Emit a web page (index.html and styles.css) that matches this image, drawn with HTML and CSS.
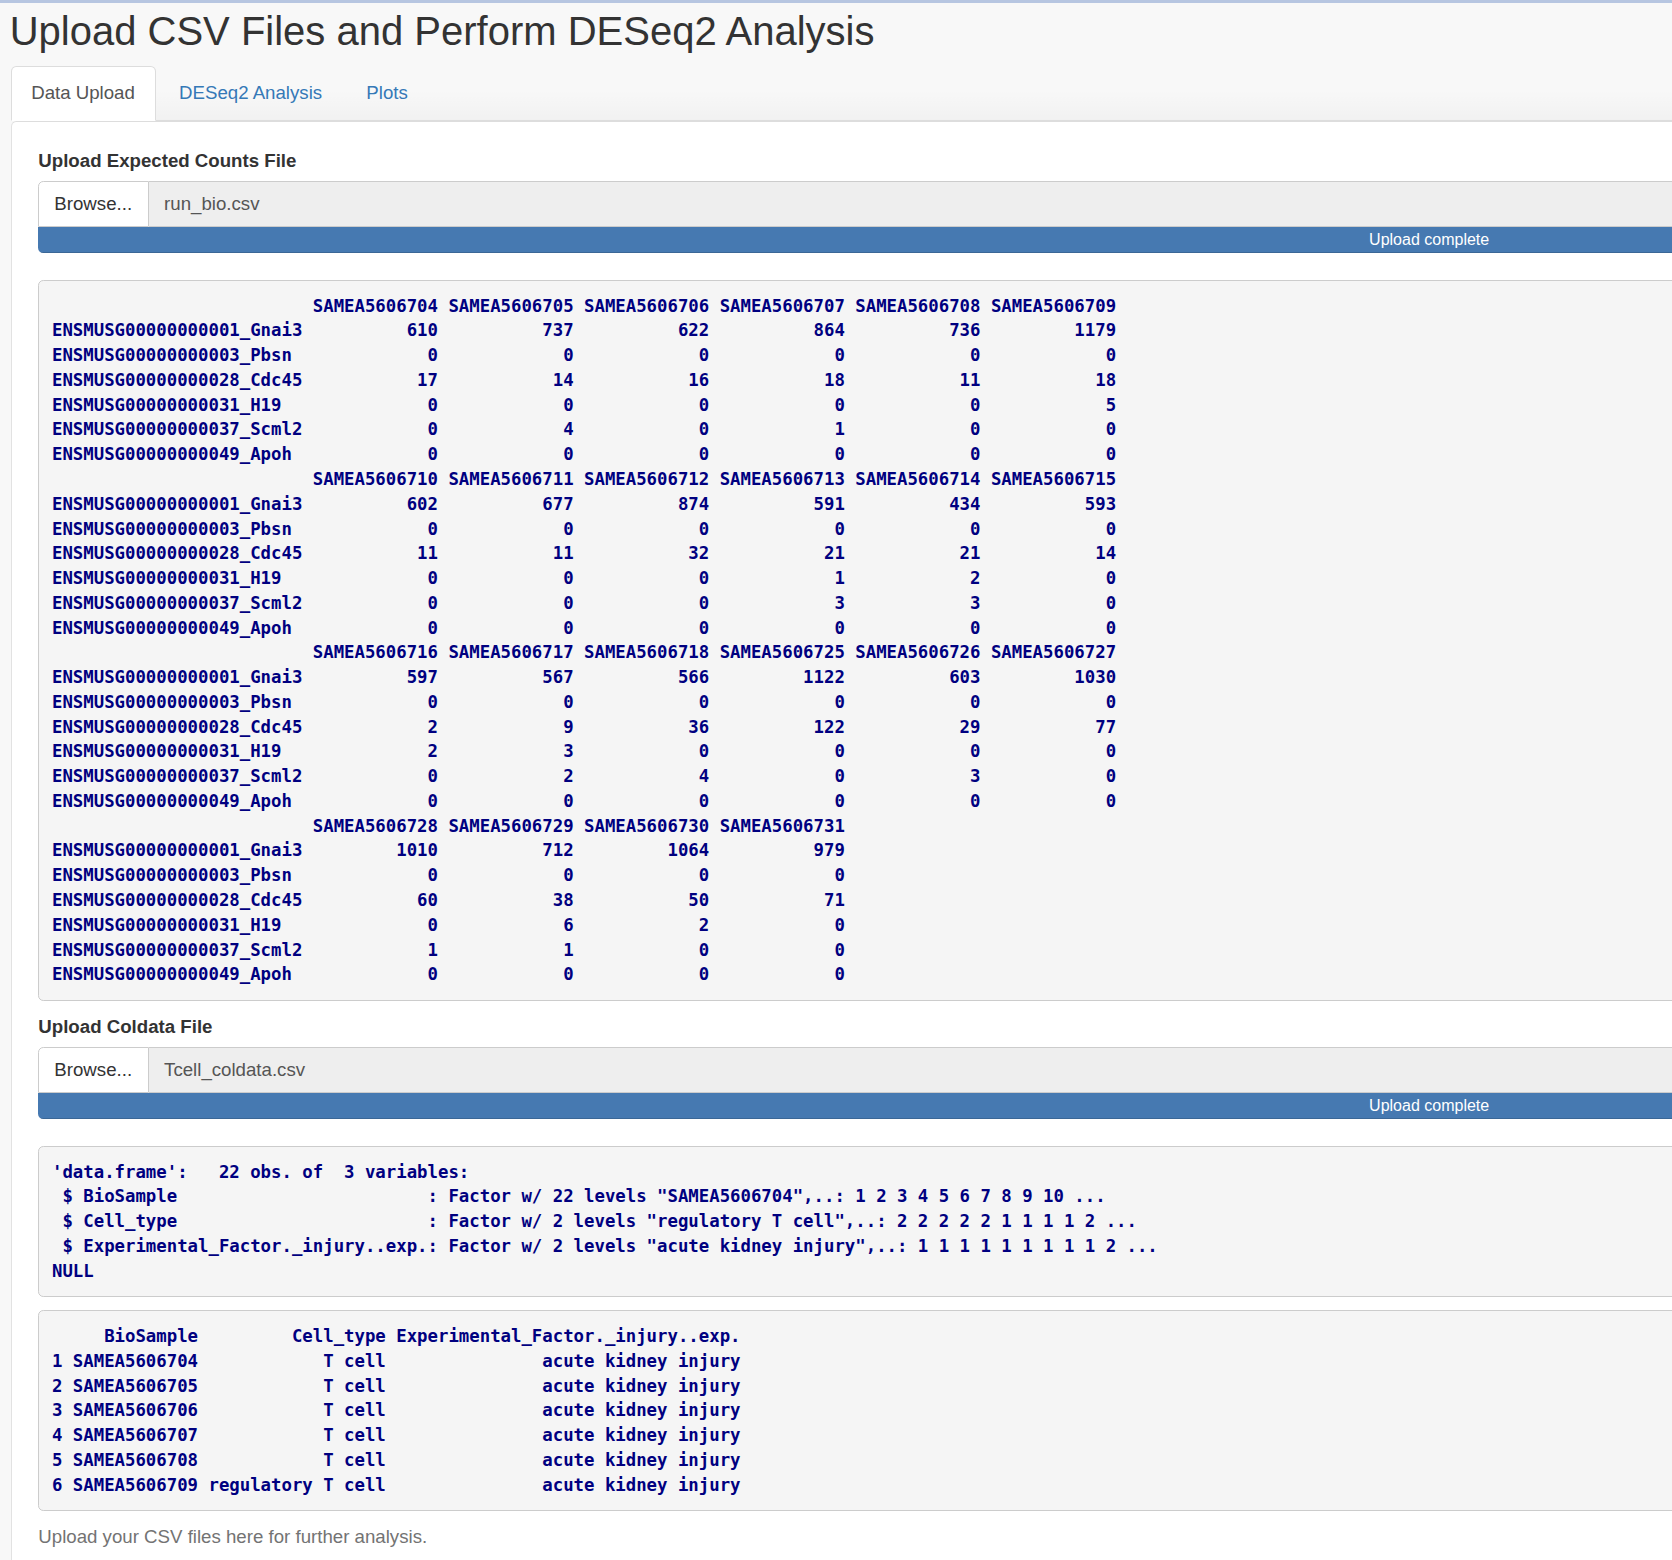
FILE: index.html
```html
<!DOCTYPE html>
<html lang="en">
<head>
<meta charset="utf-8">
<title>Upload CSV Files and Perform DESeq2 Analysis</title>
<link rel="stylesheet" href="styles.css">
</head>
<body>
<div class="topline"></div>
<div class="page">
  <h2 class="title">Upload CSV Files and Perform DESeq2 Analysis</h2>
  <ul class="tabs">
    <li class="tab active"><a>Data Upload</a></li>
    <li class="tab"><a>DESeq2 Analysis</a></li>
    <li class="tab"><a>Plots</a></li>
  </ul>
  <div class="panel">
    <div class="field">
      <label class="field-label">Upload Expected Counts File</label>
      <div class="file-input">
        <span class="browse">Browse...</span>
        <span class="file-name">run_bio.csv</span>
      </div>
      <div class="progress"><div class="progress-bar">Upload complete</div></div>
    </div>
<pre class="out">                         SAMEA5606704 SAMEA5606705 SAMEA5606706 SAMEA5606707 SAMEA5606708 SAMEA5606709
ENSMUSG00000000001_Gnai3          610          737          622          864          736         1179
ENSMUSG00000000003_Pbsn             0            0            0            0            0            0
ENSMUSG00000000028_Cdc45           17           14           16           18           11           18
ENSMUSG00000000031_H19              0            0            0            0            0            5
ENSMUSG00000000037_Scml2            0            4            0            1            0            0
ENSMUSG00000000049_Apoh             0            0            0            0            0            0
                         SAMEA5606710 SAMEA5606711 SAMEA5606712 SAMEA5606713 SAMEA5606714 SAMEA5606715
ENSMUSG00000000001_Gnai3          602          677          874          591          434          593
ENSMUSG00000000003_Pbsn             0            0            0            0            0            0
ENSMUSG00000000028_Cdc45           11           11           32           21           21           14
ENSMUSG00000000031_H19              0            0            0            1            2            0
ENSMUSG00000000037_Scml2            0            0            0            3            3            0
ENSMUSG00000000049_Apoh             0            0            0            0            0            0
                         SAMEA5606716 SAMEA5606717 SAMEA5606718 SAMEA5606725 SAMEA5606726 SAMEA5606727
ENSMUSG00000000001_Gnai3          597          567          566         1122          603         1030
ENSMUSG00000000003_Pbsn             0            0            0            0            0            0
ENSMUSG00000000028_Cdc45            2            9           36          122           29           77
ENSMUSG00000000031_H19              2            3            0            0            0            0
ENSMUSG00000000037_Scml2            0            2            4            0            3            0
ENSMUSG00000000049_Apoh             0            0            0            0            0            0
                         SAMEA5606728 SAMEA5606729 SAMEA5606730 SAMEA5606731
ENSMUSG00000000001_Gnai3         1010          712         1064          979
ENSMUSG00000000003_Pbsn             0            0            0            0
ENSMUSG00000000028_Cdc45           60           38           50           71
ENSMUSG00000000031_H19              0            6            2            0
ENSMUSG00000000037_Scml2            1            1            0            0
ENSMUSG00000000049_Apoh             0            0            0            0</pre>
    <div class="field">
      <label class="field-label">Upload Coldata File</label>
      <div class="file-input">
        <span class="browse">Browse...</span>
        <span class="file-name">Tcell_coldata.csv</span>
      </div>
      <div class="progress"><div class="progress-bar">Upload complete</div></div>
    </div>
<pre class="out">'data.frame':   22 obs. of  3 variables:
 $ BioSample                        : Factor w/ 22 levels "SAMEA5606704",..: 1 2 3 4 5 6 7 8 9 10 ...
 $ Cell_type                        : Factor w/ 2 levels "regulatory T cell",..: 2 2 2 2 2 1 1 1 1 2 ...
 $ Experimental_Factor._injury..exp.: Factor w/ 2 levels "acute kidney injury",..: 1 1 1 1 1 1 1 1 1 2 ...
NULL</pre>
<pre class="out">     BioSample         Cell_type Experimental_Factor._injury..exp.
1 SAMEA5606704            T cell               acute kidney injury
2 SAMEA5606705            T cell               acute kidney injury
3 SAMEA5606706            T cell               acute kidney injury
4 SAMEA5606707            T cell               acute kidney injury
5 SAMEA5606708            T cell               acute kidney injury
6 SAMEA5606709 regulatory T cell               acute kidney injury</pre>
    <p class="help">Upload your CSV files here for further analysis.</p>
  </div>
</div>
</body>
</html>
```
FILE: styles.css
```css
html, body {
  margin: 0;
  padding: 0;
  overflow: hidden;
}
body {
  background: #f8f8f8;
  font-family: "Liberation Sans", Arial, Helvetica, sans-serif;
  font-size: 18.67px;
  line-height: 1.42857;
  color: #333;
}
.topline {
  height: 3px;
  background: #b7c6e1;
}
.page {
  width: 2837px;
  padding-left: 10.67px;
}
.title {
  margin: 5.8px 0 13.33px -1px;
  font-size: 40px;
  font-weight: 500;
  line-height: 1.1;
  color: #333;
}
.tabs {
  list-style: none;
  margin: 0;
  padding: 0;
  display: flex;
  border-bottom: 1px solid #ddd;
  background: linear-gradient(to bottom, rgba(0,0,0,0) 45%, rgba(0,0,0,0.028) 100%);
}
.tab {
  margin-bottom: -1px;
}
.tab a {
  display: block;
  margin-right: 2.67px;
  padding: 12.9px 20px 12.9px 19.5px;
  line-height: 26.67px;
  border: 1px solid transparent;
  border-radius: 5.33px 5.33px 0 0;
  color: #3579b7;
}
.tab.active a {
  color: #555;
  background: #fff;
  border-color: #ddd;
  border-bottom-color: transparent;
}
.panel {
  background: #fff;
  border: 1px solid #ddd;
  border-left-color: #e2e2e2;
  border-radius: 5.33px 0 0 0;
  padding: 26.5px 26.67px 26.67px;
}
.field-label {
  display: block;
  font-weight: bold;
  margin-bottom: 6.67px;
  line-height: 26.67px;
}
.file-input {
  display: flex;
  height: 45.33px;
  box-sizing: border-box;
}
.browse {
  display: flex;
  align-items: center;
  padding: 0 16px 0 15px;
  background: #fff;
  color: #333;
  border: 1px solid #ccc;
  border-radius: 5.33px 0 0 0;
}
.file-name {
  flex: 1;
  display: flex;
  align-items: center;
  padding: 0 16px 0 15px;
  background: #eee;
  color: #555;
  border: 1px solid #ccc;
  border-left: none;
}
.progress {
  height: 26.67px;
  margin-bottom: 26.67px;
  border-radius: 0 0 5.33px 5.33px;
  overflow: hidden;
  background: #f5f5f5;
}
.progress-bar {
  height: 100%;
  background: #4679b1;
  box-shadow: inset 0 -1px 0 rgba(0,0,0,0.15);
  color: #fff;
  font-size: 16px;
  line-height: 26.67px;
  text-align: center;
}
.out {
  margin: 0 0 13.33px;
  padding: 12.6px 12.67px 12.67px;
  background: #f5f5f5;
  border: 1px solid #ccc;
  border-radius: 5.33px;
  font-family: "DejaVu Sans Mono", "Liberation Mono", monospace;
  font-weight: bold;
  font-size: 17.33px;
  line-height: 24.76px;
  color: #000080;
  white-space: pre;
}
.help {
  margin: 0;
  color: #737373;
  line-height: 26.67px;
}
```
